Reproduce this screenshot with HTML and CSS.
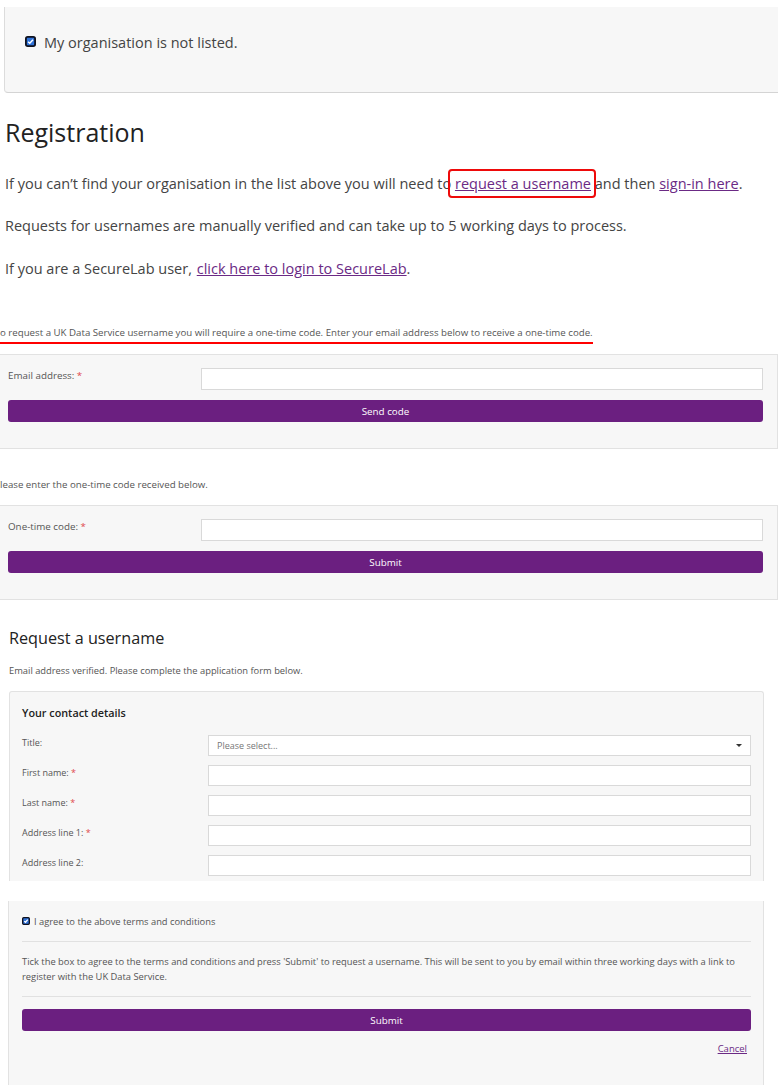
FILE: index.html
```html
<!DOCTYPE html>
<html lang="en">
<head>
<meta charset="utf-8">
<title>Registration</title>
<link rel="stylesheet" href="styles.css">
</head>
<body>
<div class="page">
  <section class="org-panel">
    <div class="check-row check-row-lg">
      <svg class="cb cb-lg" viewBox="0 0 12 12" aria-hidden="true"><rect x="1" y="1" width="10" height="10" rx="2" fill="#2f72d8" stroke="#10121f" stroke-width="2"/><path d="M3.4 6.2 L5.2 7.9 L8.7 4" fill="none" stroke="#fff" stroke-width="1.6"/></svg>
      <span>My organisation is not listed.</span>
    </div>
  </section>

  <section class="registration">
    <h1>Registration</h1>
    <p>If you can’t find your organisation in the list above you will need to <a href="#" class="boxed">request a username</a> and then <a href="#">sign-in here</a>.</p>
    <p>Requests for usernames are manually verified and can take up to 5 working days to process.</p>
    <p>If you are a SecureLab user, <a href="#" class="link-lg">click here to login to SecureLab</a>.</p>
  </section>

  <p class="note note-cut"><span class="underlined">o request a UK Data Service username you will require a one-time code. Enter your email address below to receive a one-time code.</span></p>

  <form class="panel panel-wide">
    <div class="field">
      <label class="label">Email address: <span class="req">*</span></label>
      <span class="input"></span>
    </div>
    <button type="button" class="btn">Send code</button>
  </form>

  <p class="note note-cut note2">lease enter the one-time code received below.</p>

  <form class="panel panel-wide">
    <div class="field">
      <label class="label">One-time code: <span class="req">*</span></label>
      <span class="input"></span>
    </div>
    <button type="button" class="btn">Submit</button>
  </form>

  <section class="request">
    <h2>Request a username</h2>
    <p class="note verified">Email address verified. Please complete the application form below.</p>
    <div class="panel panel-contact">
      <h3>Your contact details</h3>
      <div class="rows">
        <div class="field field-c">
          <label class="label label-c">Title:</label>
          <span class="input select"><span class="placeholder">Please select...</span><span class="caret"></span></span>
        </div>
        <div class="field field-c">
          <label class="label label-c">First name: <span class="req">*</span></label>
          <span class="input"></span>
        </div>
        <div class="field field-c">
          <label class="label label-c">Last name: <span class="req">*</span></label>
          <span class="input"></span>
        </div>
        <div class="field field-c">
          <label class="label label-c">Address line 1: <span class="req">*</span></label>
          <span class="input"></span>
        </div>
        <div class="field field-c">
          <label class="label label-c">Address line 2:</label>
          <span class="input"></span>
        </div>
      </div>
    </div>

    <div class="panel panel-terms">
      <div class="check-row check-row-sm">
        <svg class="cb cb-sm" viewBox="0 0 12 12" aria-hidden="true"><rect x="1" y="1" width="10" height="10" rx="1.5" fill="#2f72d8" stroke="#10121f" stroke-width="2"/><path d="M3.4 6.2 L5.2 7.9 L8.7 4" fill="none" stroke="#fff" stroke-width="1.8"/></svg>
        <span>I agree to the above terms and conditions</span>
      </div>
      <hr>
      <p class="terms-text">Tick the box to agree to the terms and conditions and press 'Submit' to request a username. This will be sent to you by email within three working days with a link to register with the UK Data Service.</p>
      <hr>
      <button type="button" class="btn">Submit</button>
      <div class="cancel-row"><a href="#">Cancel</a></div>
    </div>
  </section>
</div>
</body>
</html>
```

FILE: styles.css
```css
* { box-sizing: border-box; }

html, body {
  margin: 0;
  padding: 0;
  background: #fff;
}

body {
  font-family: "Open Sans", "DejaVu Sans", sans-serif;
  color: #444;
  overflow: hidden;
}

.page {
  width: 778px;
}

a {
  color: #6b2a85;
  text-decoration: underline;
}

/* top panel */
.org-panel {
  margin: 7px -10px 0 4px;
  height: 86px;
  background: #f7f7f7;
  border-left: 1px solid #dcdcdc;
  border-bottom: 1px solid #d4d4d4;
  border-bottom-left-radius: 4px;
  padding: 26px 0 0 20px;
}

.check-row {
  display: flex;
  align-items: center;
}

.check-row-lg {
  font-size: 14.5px;
  color: #444;
  line-height: 20px;
}

.cb-lg {
  width: 11px;
  height: 11px;
  margin-right: 8px;
  position: relative;
  top: -2px;
}

/* registration */
.registration {
  padding-left: 5px;
}

.registration h1 {
  margin: 24px 0 0;
  font-size: 25px;
  font-weight: 400;
  line-height: 30px;
  color: #222;
}

.registration p {
  margin: 25px 0 0;
  font-size: 14.5px;
  line-height: 24px;
  color: #444;
}

.registration p + p {
  margin-top: 18px;
}

.registration p:last-child {
  margin-top: 19px;
}

.boxed {
  position: relative;
}

.boxed::after {
  content: "";
  position: absolute;
  left: -7px;
  right: -5px;
  top: -5px;
  bottom: -5px;
  border: 2.5px solid #ee0a0a;
  border-radius: 4px;
}

.link-lg {
  margin-left: 1px;
}

/* notes */
.note {
  margin: 0;
  font-size: 9.7px;
  line-height: 14px;
  color: #555;
}

.note-cut {
  margin-top: 45px;
}

.underlined {
  display: inline-block;
  border-bottom: 2px solid #f00;
  padding-bottom: 2px;
}

.note2 {
  margin-top: 29px;
}

/* panels */
.panel {
  background: #f7f7f7;
  border: 1px solid #e2e2e2;
}

.panel-wide {
  margin: 10px 0 0;
  width: 778px;
  border-left: none;
  padding: 13px 14px 26px 8px;
}

.note2 + .panel-wide {
  margin-top: 13px;
}

.field {
  display: flex;
  align-items: center;
}

.label {
  width: 193px;
  flex: none;
  font-size: 9.8px;
  color: #555;
  line-height: 14px;
  align-self: flex-start;
  padding-top: 1px;
}

.req {
  color: #e0474c;
}

.input {
  flex: 1;
  height: 22px;
  background: #fff;
  border: 1px solid #d9d9d9;
  display: flex;
  align-items: center;
}

.btn {
  display: block;
  width: 100%;
  margin-top: 10px;
  height: 22px;
  border: none;
  border-radius: 3px;
  background: #6b1f80;
  color: #fff;
  font-family: "Open Sans", "DejaVu Sans", sans-serif;
  font-size: 9.8px;
  padding: 0;
}

/* request section */
.request {
  padding-left: 9px;
  width: 764px;
}

.request h2 {
  margin: 27px 0 0;
  font-size: 16.2px;
  font-weight: 400;
  line-height: 22px;
  color: #222;
}

.verified {
  margin-top: 15px;
  font-size: 9.35px;
}

.panel-contact {
  margin-top: 13px;
  border-bottom: none;
  padding: 13px 12px 5px 12px;
  border-radius: 3px 3px 0 0;
}

.panel-contact h3 {
  margin: 0;
  font-size: 10.8px;
  font-weight: 600;
  line-height: 16px;
  color: #222;
}

.rows {
  margin-top: 14px;
  display: flex;
  flex-direction: column;
  gap: 9px;
}

.field-c .input {
  height: 21px;
}

.label-c {
  width: 186px;
  font-size: 9px;
  padding-top: 1px;
}

.select {
  justify-content: space-between;
  padding: 0 8px;
}

.placeholder {
  font-size: 9px;
  color: #777;
}

.caret {
  width: 0;
  height: 0;
  border-left: 3px solid transparent;
  border-right: 3px solid transparent;
  border-top: 3px solid #333;
}

.panel-terms {
  margin: 20px 0 0 -1px;
  width: 756px;
  border-top: none;
  border-bottom: none;
  padding: 14px 12px 29px 13px;
}

.check-row-sm {
  font-size: 9.35px;
  line-height: 14px;
  color: #555;
}

.cb-sm {
  width: 8px;
  height: 8px;
  margin-right: 4px;
  position: relative;
  top: -1px;
}

.panel-terms hr {
  border: none;
  border-top: 1px solid #e1e1e1;
  margin: 12px 0 0;
}

.terms-text {
  margin: 12px 0 11px;
  font-size: 9.35px;
  line-height: 15px;
  color: #555;
}

.panel-terms .btn {
  margin-top: 12px;
}

.cancel-row {
  margin-top: 11px;
  text-align: right;
  padding-right: 4px;
  font-size: 9.5px;
  line-height: 14px;
}
```
